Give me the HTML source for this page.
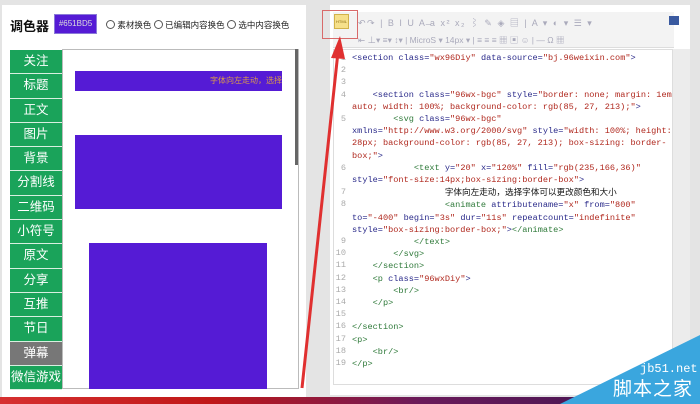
<!DOCTYPE html>
<html><head><meta charset="utf-8"><style>
*{margin:0;padding:0;box-sizing:border-box}
body{width:700px;height:404px;background:#e4e4e4;position:relative;overflow:hidden;font-family:"Liberation Sans","Noto Sans CJK SC",sans-serif}
.abs{position:absolute}
.menu div{height:24.3px;border-bottom:1px solid #d8efe0;background:#1aa35a;color:#fff;font-size:12.5px;text-align:center;line-height:23px}
.code{font-family:"Liberation Mono",monospace;font-size:8.6px;line-height:12.2px;color:#2a2a8a;white-space:pre}
.ln{font-family:"Liberation Mono",monospace;font-size:8.6px;line-height:12.2px;color:#aaa;text-align:right;white-space:pre}
.s{color:#b0281e}.g{color:#2f7a3a}
</style></head><body>
<div class="abs" style="left:2px;top:5px;width:304px;height:392px;background:#fff"></div>
<div class="abs" style="left:10px;top:16px;font-size:13px;font-weight:bold;color:#111">调色器</div>
<div class="abs" style="left:54px;top:14px;width:43px;height:20px;background:#551bd5;border:1px solid #8a7ad8;color:#ddd;font-size:8px;line-height:18px;text-align:center">#651BD5</div>
<div class="abs" style="left:106px;top:19px;font-size:8.5px;color:#222">
<span style="display:inline-block;width:9px;height:9px;border:1px solid #555;border-radius:50%;vertical-align:-1px"></span> 素材换色 <span style="display:inline-block;width:9px;height:9px;border:1px solid #555;border-radius:50%;vertical-align:-1px"></span> 已编辑内容换色 <span style="display:inline-block;width:9px;height:9px;border:1px solid #555;border-radius:50%;vertical-align:-1px"></span> 选中内容换色</div>
<div class="abs" style="left:62px;top:49px;width:237px;height:340px;border:1px solid #bbb;background:#fff"></div>
<div class="abs" style="left:295px;top:49px;width:3px;height:116px;background:#666"></div>
<div class="abs menu" style="left:10px;top:50px;width:52px">
<div>关注</div><div>标题</div><div>正文</div><div>图片</div><div>背景</div><div>分割线</div><div>二维码</div><div>小符号</div><div>原文</div><div>分享</div><div>互推</div><div>节日</div><div style="background:#777">弹幕</div><div>微信游戏</div></div>
<div class="abs" style="left:75px;top:71px;width:207px;height:20px;background:#551bd5;color:#d99a4a;font-size:8px;line-height:20px;text-align:right;overflow:hidden;white-space:nowrap">字体向左走动，选择</div>
<div class="abs" style="left:75px;top:135px;width:207px;height:74px;background:#551bd5"></div>
<div class="abs" style="left:89px;top:243px;width:178px;height:146px;background:#551bd5"></div>

<div class="abs" style="left:330px;top:5px;width:360px;height:390px;background:#fff"></div>
<div class="abs" style="left:333px;top:12px;width:341px;height:36px;background:#f3f3f3;border-bottom:1px solid #ddd"></div>
<div class="abs" style="left:358px;top:16px;font-size:9px;color:#aab;letter-spacing:1.5px;white-space:nowrap">↶↷ | B I U A ̶a x² x₂ ⌇ ✎ ◈ ▤ | A ▾ ◐ ▾ ☰ ▾</div>
<div class="abs" style="left:358px;top:34px;font-size:8.5px;color:#aab;white-space:nowrap">⇤ ⊥▾ ≡▾ ↕▾ | MicroS ▾ 14px ▾ | ≡ ≡ ≡ ▦ ▣ ☺ | — Ω ▦</div>
<div class="abs" style="left:669px;top:16px;width:10px;height:9px;background:#3a5aa0"></div>
<div class="abs" style="left:334px;top:14px;width:15px;height:15px;background:#f6e08a;border:1px solid #d2b24a;font-size:4px;line-height:13px;text-align:center;color:#8a6a10">HTML</div>
<div class="abs" style="left:322px;top:10px;width:36px;height:29px;border:1px solid #d86a6a"></div>
<div class="abs" style="left:333px;top:49px;width:340px;height:336px;background:#fff;border:1px solid #ddd"></div>
<div class="abs" style="left:673px;top:49px;width:17px;height:340px;background:#ececec"></div>
<div class="abs ln" style="left:334px;top:52px;width:12px">1
2
3
4

5



6

7
8


9
10
11
12
13
14
15
16
17
18
19</div>
<div class="abs code" style="left:352px;top:52px"><span>&lt;section </span>class=<span class="s">"wx96Diy"</span> data-source=<span class="s">"bj.96weixin.com"</span>&gt;


    &lt;section class=<span class="s">"96wx-bgc"</span> style=<span class="s">"border: none; margin: 1em</span>
<span class="s">auto; width: 100%; background-color: rgb(85, 27, 213);"</span>&gt;
        <span class="g">&lt;svg</span> class=<span class="s">"96wx-bgc"</span>
xmlns=<span class="s">"http://www.w3.org/2000/svg"</span> style=<span class="s">"width: 100%; height:</span>
<span class="s">28px; background-color: rgb(85, 27, 213); box-sizing: border-</span>
<span class="s">box;"</span>&gt;
            <span class="g">&lt;text</span> y=<span class="s">"20"</span> x=<span class="s">"120%"</span> fill=<span class="s">"rgb(235,166,36)"</span>
style=<span class="s">"font-size:14px;box-sizing:border-box"</span>&gt;
                  <span style="color:#111;font-family:'Noto Sans CJK SC',sans-serif">字体向左走动，选择字体可以更改颜色和大小</span>
                  <span class="g">&lt;animate</span> attributename=<span class="s">"x"</span> from=<span class="s">"800"</span>
to=<span class="s">"-400"</span> begin=<span class="s">"3s"</span> dur=<span class="s">"11s"</span> repeatcount=<span class="s">"indefinite"</span>
style=<span class="s">"box-sizing:border-box;"</span>&gt;<span class="g">&lt;/animate&gt;</span>
<span class="g">            &lt;/text&gt;
        &lt;/svg&gt;
    &lt;/section&gt;
    &lt;p</span> class=<span class="s">"96wxDiy"</span>&gt;
<span class="g">        &lt;br/&gt;
    &lt;/p&gt;

&lt;/section&gt;
&lt;p&gt;
    &lt;br/&gt;
&lt;/p&gt;</span></div>
<div class="abs" style="left:0;top:397px;width:700px;height:7px;background:linear-gradient(90deg,#d63030,#c01818 30%,#6a1a5a 60%,#3a1450)"></div>
<svg class="abs" style="left:0;top:0" width="700" height="404">
<polygon points="560,404 700,335 700,404" fill="#3aa6de"/>
<line x1="302" y1="388" x2="338" y2="52" stroke="#e03030" stroke-width="3"/>
<polygon points="331,58 340,36 345,59" fill="#e03030"/>
</svg>
<div class="abs" style="left:640px;top:362px;color:#fff;font-family:'Liberation Mono',monospace;font-size:12px">jb51.net</div>
<div class="abs" style="left:613px;top:377px;color:#fff;font-size:19px;letter-spacing:1px;font-family:'Noto Sans CJK SC',sans-serif;line-height:22px">脚本之家</div>
</body></html>
